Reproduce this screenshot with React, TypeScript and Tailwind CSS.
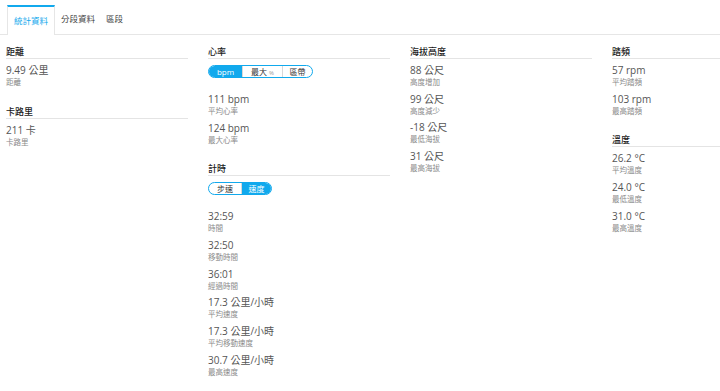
type Stat = { value: string; label: string }

type Section = {
  title: string
  toggle?: { items: string[]; active: number }
  stats: Stat[]
}

const columns: Section[][] = [
  [
    { title: '距離', stats: [{ value: '9.49 公里', label: '距離' }] },
    { title: '卡路里', stats: [{ value: '211 卡', label: '卡路里' }] },
  ],
  [
    {
      title: '心率',
      toggle: { items: ['bpm', '最大 %', '區帶'], active: 0 },
      stats: [
        { value: '111 bpm', label: '平均心率' },
        { value: '124 bpm', label: '最大心率' },
      ],
    },
    {
      title: '計時',
      toggle: { items: ['步速', '速度'], active: 1 },
      stats: [
        { value: '32:59', label: '時間' },
        { value: '32:50', label: '移動時間' },
        { value: '36:01', label: '經過時間' },
        { value: '17.3 公里/小時', label: '平均速度' },
        { value: '17.3 公里/小時', label: '平均移動速度' },
        { value: '30.7 公里/小時', label: '最高速度' },
      ],
    },
  ],
  [
    {
      title: '海拔高度',
      stats: [
        { value: '88 公尺', label: '高度增加' },
        { value: '99 公尺', label: '高度減少' },
        { value: '-18 公尺', label: '最低海拔' },
        { value: '31 公尺', label: '最高海拔' },
      ],
    },
  ],
  [
    {
      title: '踏頻',
      stats: [
        { value: '57 rpm', label: '平均踏頻' },
        { value: '103 rpm', label: '最高踏頻' },
      ],
    },
    {
      title: '溫度',
      stats: [
        { value: '26.2 °C', label: '平均溫度' },
        { value: '24.0 °C', label: '最低溫度' },
        { value: '31.0 °C', label: '最高溫度' },
      ],
    },
  ],
]

const segmentWidths: Record<string, string> = {
  bpm: 'w-[33px]',
  '最大 %': 'w-[40px]',
  區帶: 'w-[30px]',
  步速: 'w-[32px]',
  速度: 'w-[30px]',
}

function Toggle({ items, active }: { items: string[]; active: number }) {
  return (
    <div className="mt-[6px] flex h-[13px] w-max overflow-hidden rounded-full border border-[#11a9ed] bg-white">
      {items.map((item, i) => (
        <div
          key={item}
          className={`flex items-center justify-center text-[8px] leading-none ${segmentWidths[item]} ${
            i === active ? 'bg-[#11a9ed] text-white' : 'text-[#333]'
          } ${i > 0 ? 'border-l border-[#d8d8d8]' : ''}`}
        >
          {item === '最大 %' ? (
            <span>
              最大 <span className="text-[6px] text-[#999]">%</span>
            </span>
          ) : (
            item
          )}
        </div>
      ))}
    </div>
  )
}

function StatSection({ section }: { section: Section }) {
  return (
    <div className="mb-[14px]">
      <div className="h-[13px] border-b border-[#e4e4e4] text-[9px] font-medium leading-[12px] text-[#1a1a1a]">
        {section.title}
      </div>
      {section.toggle && <Toggle {...section.toggle} />}
      <div className={section.toggle ? 'mt-[14px]' : 'mt-[4px]'}>
        {section.stats.map((s, i) => (
          <div key={i} className="h-[28.7px]">
            <div className="text-[10px] leading-[14px] text-[#555]">{s.value}</div>
            <div className="mt-px text-[7.5px] leading-[9px] text-[#8a8a8a]">{s.label}</div>
          </div>
        ))}
      </div>
    </div>
  )
}

export default function App() {
  return (
    <div
      className="h-[391px] w-[720px] overflow-hidden bg-white"
      style={{ fontFamily: '"Open Sans", "Noto Sans CJK TC", sans-serif' }}
    >
      {/* Tabs */}
      <div className="flex h-[35px] items-end border-b border-[#e6e6e6] pl-[7px]">
        <div className="-mb-px flex h-[30px] items-center border-x border-t-2 border-[#e6e6e6] border-t-[#11a9ed] bg-white px-[6px] text-[8.5px] text-[#11a9ed]">
          統計資料
        </div>
        <div className="flex h-[30px] items-center px-[6px] text-[8.5px] text-[#444]">分段資料</div>
        <div className="flex h-[30px] items-center px-[5px] text-[8.5px] text-[#444]">區段</div>
      </div>

      {/* Stats grid */}
      <div className="grid grid-cols-[182px_182px_182px_182px] gap-x-[20px] pl-[6px] pt-[11px]">
        {columns.map((col, i) => (
          <div key={i}>
            {col.map((section) => (
              <StatSection key={section.title} section={section} />
            ))}
          </div>
        ))}
      </div>
    </div>
  )
}
